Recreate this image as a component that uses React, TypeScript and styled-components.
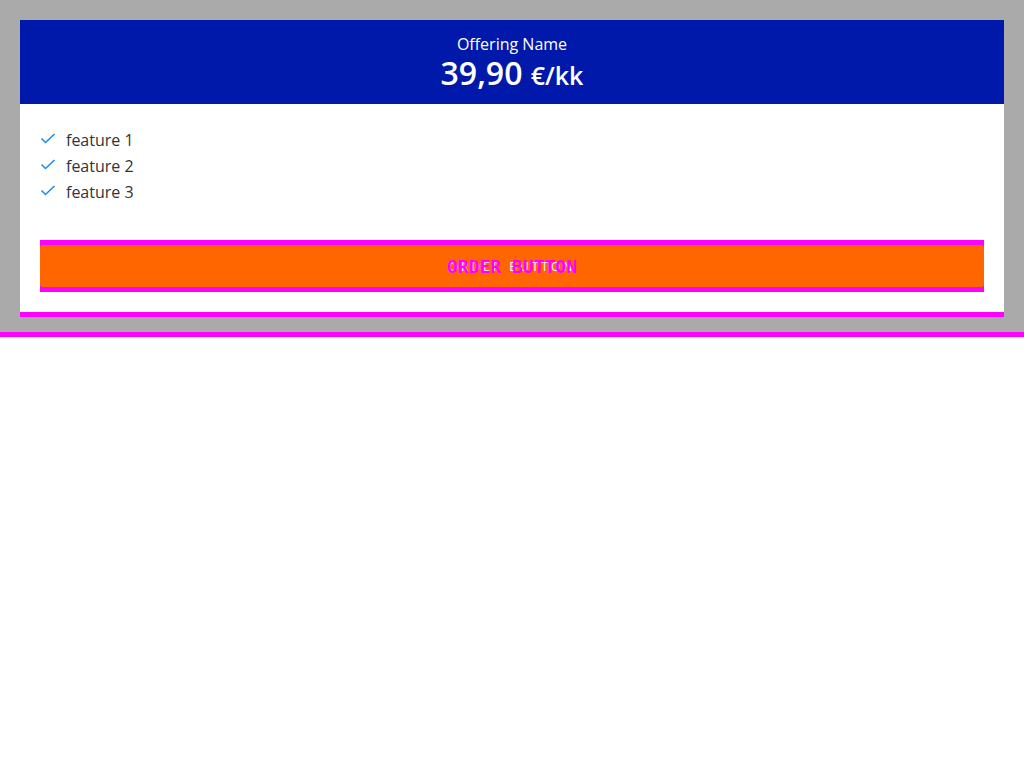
import styled, { createGlobalStyle } from "styled-components";

const GlobalStyle = createGlobalStyle`
  html, body {
    margin: 0;
    padding: 0;
    background: #ffffff;
    font-family: "Open Sans", "Liberation Sans", sans-serif;
  }
`;

const features = ["feature 1", "feature 2", "feature 3"];

const Check = () => (
  <svg width="16" height="12" viewBox="0 0 16 12" fill="none">
    <polyline points="1.5,5.5 5.5,9.5 14.5,1" stroke="#1a8cf0" strokeWidth="1.6" />
  </svg>
);

const App = () => {
  return (
    <>
      <GlobalStyle />
      <Stage>
        <Card>
          <Header>
            <Name>Offering Name</Name>
            <Price>
              39,90 <Unit>€/kk</Unit>
            </Price>
          </Header>
          <Body>
            <Features>
              {features.map((f) => (
                <Feature key={f}>
                  <Check />
                  <span>{f}</span>
                </Feature>
              ))}
            </Features>
            <ButtonFrame>
              <OrderButton>
                <ButtonGhost>ORDER BUTTON</ButtonGhost>
                <ButtonLabel>ORDER BUTTON</ButtonLabel>
              </OrderButton>
            </ButtonFrame>
          </Body>
        </Card>
      </Stage>
    </>
  );
};

const Stage = styled.div`
  background: #aaaaaa;
  padding: 20px 20px 15px;
  border-bottom: 5px solid #ff00ff;
`;

const Card = styled.div`
  background: #ffffff;
  border-bottom: 5px solid #ff00ff;
`;

const Header = styled.div`
  background: #0019aa;
  color: #ffffff;
  height: 84px;
  box-sizing: border-box;
  padding-top: 14px;
  display: flex;
  flex-direction: column;
  align-items: center;
`;

const Name = styled.div`
  font-size: 16px;
  line-height: 20px;
`;

const Price = styled.div`
  font-size: 32px;
  line-height: 38px;
  font-weight: 600;
`;

const Unit = styled.span`
  font-size: 25px;
`;

const Body = styled.div`
  padding: 23px 20px 20px;
`;

const Features = styled.ul`
  list-style: none;
  margin: 0;
  padding: 0;
`;

const Feature = styled.li`
  display: flex;
  align-items: center;
  gap: 10px;
  height: 26px;
  font-size: 16px;
  color: #333333;

  svg {
    margin-top: -2px;
  }
`;

const ButtonFrame = styled.div`
  margin-top: 35px;
  background: #ff00ff;
  padding: 5px 0 5px;
`;

const OrderButton = styled.div`
  position: relative;
  height: 42px;
  background: #ff6600;
  border-radius: 3px;
  display: flex;
  align-items: center;
  justify-content: center;
`;

const ButtonLabel = styled.span`
  position: relative;
  font-family: "DejaVu Sans Mono", "Liberation Mono", monospace;
  font-weight: bold;
  font-size: 18px;
  color: #ff00ff;
`;

const ButtonGhost = styled.span`
  position: absolute;
  left: 0;
  right: 0;
  top: 50%;
  transform: translateY(-50%);
  text-align: center;
  font-size: 12px;
  letter-spacing: 3px;
  color: #ffffff;
`;

export default App;
